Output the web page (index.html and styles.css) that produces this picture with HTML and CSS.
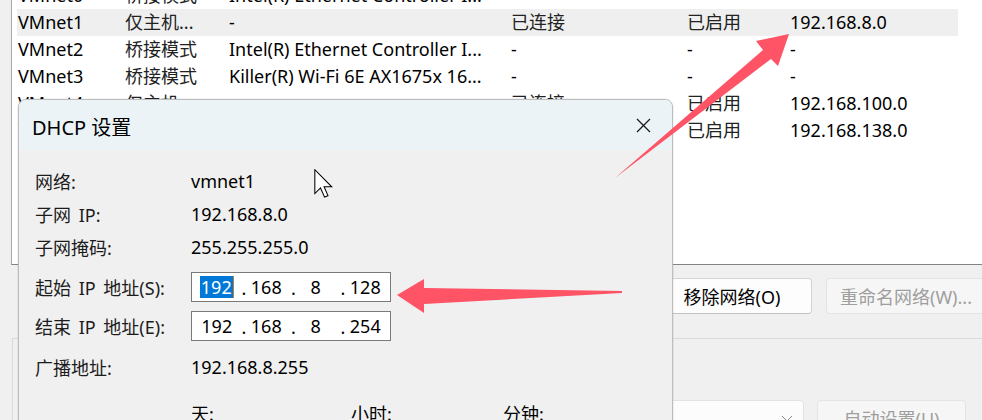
FILE: index.html
```html
<!DOCTYPE html>
<html lang="zh-CN">
<head>
  <meta charset="UTF-8" />
  <meta name="viewport" content="width=device-width, initial-scale=1.0"/>
  <title>虚拟网络编辑器 - DHCP 设置</title>
  <link rel="stylesheet" href="styles.css">
</head>
<body>

  <div class="app">
    <div class="net-list">
      <div class="rows">
        <div class="row">
          <span>VMnet0</span><span class="cn">桥接模式</span><span>Intel(R) Ethernet Controller I...</span><span>-</span><span>-</span><span>-</span>
        </div>
        <div class="row selected">
          <span>VMnet1</span><span class="cn">仅主机...</span><span>-</span><span class="cn">已连接</span><span class="cn">已启用</span><span>192.168.8.0</span>
        </div>
        <div class="row">
          <span>VMnet2</span><span class="cn">桥接模式</span><span>Intel(R) Ethernet Controller I...</span><span>-</span><span>-</span><span>-</span>
        </div>
        <div class="row">
          <span>VMnet3</span><span class="cn">桥接模式</span><span>Killer(R) Wi-Fi 6E AX1675x 16...</span><span>-</span><span>-</span><span>-</span>
        </div>
        <div class="row">
          <span>VMnet4</span><span class="cn">仅主机...</span><span>-</span><span class="cn">已连接</span><span class="cn">已启用</span><span>192.168.100.0</span>
        </div>
        <div class="row">
          <span>VMnet8</span><span class="cn">NAT 模式</span><span class="cn">NAT 模式</span><span class="cn">已连接</span><span class="cn">已启用</span><span>192.168.138.0</span>
        </div>
      </div>
    </div>

    <div class="actions">
      <button class="btn">添加网络(E)...</button>
      <button class="btn">移除网络(O)</button>
      <button class="btn" disabled>重命名网络(W)...</button>
    </div>

    <div class="group">
      <div class="combo">
        <svg width="12" height="7" viewBox="0 0 12 7"><path d="M1 1 L6 6 L11 1" fill="none" stroke="#8a8a8a" stroke-width="1"/></svg>
      </div>
      <button class="btn btn-auto" disabled>自动设置(U)</button>
    </div>
  </div>

  <div class="dialog">
    <div class="dialog-title">
      <span>DHCP 设置</span>
      <svg width="15" height="15" viewBox="0 0 15 15"><path d="M1 1 L14 14 M14 1 L1 14" stroke="#1a1a1a" stroke-width="1.3"/></svg>
    </div>
    <div class="dialog-body">
      <div class="field"><span class="label">网络:</span><span>vmnet1</span></div>
      <div class="field"><span class="label">子网 IP:</span><span>192.168.8.0</span></div>
      <div class="field"><span class="label">子网掩码:</span><span>255.255.255.0</span></div>
      <div class="field field-ip">
        <span class="label">起始 IP 地址(S):</span>
        <div class="ip-box">
          <span class="octet"><span class="sel">192</span></span><span class="dot">.</span>
          <span class="octet">168</span><span class="dot">.</span>
          <span class="octet">8</span><span class="dot">.</span>
          <span class="octet">128</span>
        </div>
      </div>
      <div class="field field-ip">
        <span class="label">结束 IP 地址(E):</span>
        <div class="ip-box">
          <span class="octet">192</span><span class="dot">.</span>
          <span class="octet">168</span><span class="dot">.</span>
          <span class="octet">8</span><span class="dot">.</span>
          <span class="octet">254</span>
        </div>
      </div>
      <div class="field"><span class="label">广播地址:</span><span>192.168.8.255</span></div>
      <div class="field lease">
        <span class="label"></span><span class="lease-day">天:</span><span class="lease-hour">小时:</span><span>分钟:</span>
      </div>
    </div>
  </div>

  <svg class="arrows" width="982" height="420" viewBox="0 0 982 420">
    <polygon points="615,178 763,50 756,41 789,34 778,66 771,59" fill="#ff5366"/>
    <polygon points="397,295 424,279 424,288 622,291 622,293 424,304 424,313" fill="#ff5366"/>
  </svg>

  <svg class="cursor" width="19" height="29" viewBox="0 0 12.6 19.4">
    <path d="M0.5 0.5 V16.4 L4.3 12.7 L7 18.8 L9.3 17.8 L6.7 11.9 H11.8 Z" fill="#fff" stroke="#000" stroke-width="0.7" stroke-linejoin="miter"/>
  </svg>

</body>
</html>
```

FILE: styles.css
```css
body {
  margin: 0;
  width: 982px;
  height: 420px;
  position: relative;
  overflow: hidden;
  background-color: #f0f0f0;
  font-family: "Noto Sans", "Noto Sans CJK SC", sans-serif;
  font-size: 18px;
  color: #000;
}

.app {
  width: 1000px;
  padding-left: 11px;
  box-sizing: border-box;
}

/* network list */
.net-list {
  height: 264px;
  background-color: #fff;
  border-left: 1px solid #a9a9a9;
  border-bottom: 1px solid #848484;
  overflow: hidden;
}

.rows {
  margin-top: -18px;
  padding-left: 5px;
}

.row {
  display: grid;
  grid-template-columns: 108px 104px 282px 176px 103px 168px;
  width: 941px;
  height: 27px;
  line-height: 27px;
  white-space: nowrap;
}

.row span:first-child {
  padding-left: 1px;
}

.row.selected {
  background-color: #efefef;
}

.cn {
  color: #222;
}

/* buttons */
.actions {
  display: flex;
  justify-content: flex-end;
  gap: 14px;
  padding: 13px 14px 0 0;
}

.btn {
  width: 160px;
  height: 36px;
  padding: 0;
  font: inherit;
  color: #000;
  background-color: #fdfdfd;
  border: 1px solid #d4d4d4;
  border-bottom-color: #c2c2c2;
  border-radius: 4px;
}

.btn:disabled {
  color: #9e9e9e;
  background-color: #f6f6f6;
  border-color: #e4e4e4;
}

.btn-auto {
  width: 149px;
}

.group {
  margin: 24px 0 0 1px;
  padding: 61px 34px 0 0;
  border-top: 1px solid #dadada;
  border-left: 1px solid #dadada;
  display: flex;
  justify-content: flex-end;
  gap: 13px;
}

.combo {
  width: 300px;
  height: 36px;
  box-sizing: border-box;
  background-color: #fcfcfc;
  border: 1px solid #e2e2e2;
  border-radius: 4px;
  display: flex;
  align-items: center;
  justify-content: flex-end;
  padding-right: 10px;
}

/* dialog window */
.dialog {
  position: absolute;
  left: 18px;
  top: 99px;
  width: 655px;
  height: 330px;
  box-sizing: border-box;
  background-color: #f0f0f0;
  border: 1px solid #bdbdbd;
  border-radius: 8px;
  box-shadow: 0 0 0 1px rgba(0, 0, 0, 0.05);
  overflow: hidden;
}

.dialog-title {
  height: 50px;
  background-color: #ecf3f7;
  display: flex;
  align-items: center;
  justify-content: space-between;
  padding: 0 21px 0 13px;
}

.dialog-title span {
  margin-top: 2px;
  font-size: 20px;
}

.dialog-body {
  padding: 14px 0 0 16px;
}

.field {
  display: flex;
  align-items: center;
  height: 33px;
  white-space: nowrap;
}

.label {
  width: 156px;
  flex-shrink: 0;
  color: #1c1c1c;
  word-spacing: 3px;
}

.field-ip {
  height: 30px;
  margin: 9px 0;
}

.ip-box {
  width: 200px;
  height: 30px;
  box-sizing: border-box;
  background-color: #fff;
  border: 1px solid #7a7a7a;
  display: grid;
  grid-template-columns: 1fr 0 1fr 0 1fr 0 1fr;
  align-items: center;
}

.octet {
  text-align: center;
  line-height: 22px;
}

.dot {
  width: 0;
  overflow: visible;
  line-height: 22px;
  padding-top: 1px;
}

.sel {
  display: inline-block;
  background-color: #0078d7;
  color: #fff;
  padding: 0 1px;
  border-right: 1px solid #c9782c;
}

.lease {
  margin-top: 13px;
}

.lease-day {
  width: 160px;
}

.lease-hour {
  width: 152px;
}

/* overlays */
.arrows {
  position: absolute;
  left: 0;
  top: 0;
  pointer-events: none;
}

.cursor {
  position: absolute;
  left: 314px;
  top: 169px;
  pointer-events: none;
}
```
